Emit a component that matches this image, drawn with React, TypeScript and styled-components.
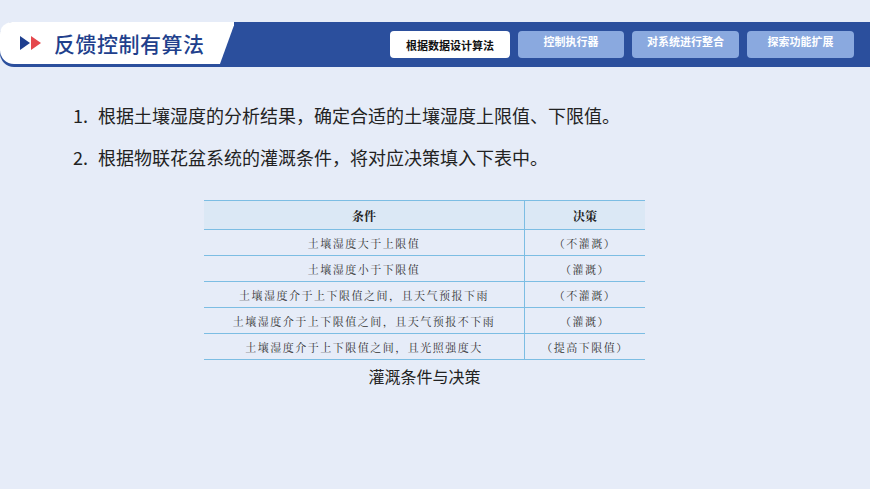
import React from "react";
import styled, { createGlobalStyle } from "styled-components";

const G = createGlobalStyle`
  html,body{margin:0;padding:0;background:#e6ecf8;}
  body{font-family:"Noto Sans CJK SC","Noto Sans",sans-serif;}
`;
const Page = styled.div`width:870px;height:489px;background:#e6ecf8;padding-top:22px;box-sizing:border-box;`;
const Header = styled.div`
  height:45px;background:#2b4f9d;border-radius:14px 0 0 14px;display:flex;align-items:center;position:relative;
`;
const TitleArea = styled.div`
  width:234px;height:42px;margin-top:-3px;background:#fff;border-radius:12px 0 0 14px;
  clip-path:polygon(0 0,100% 0,100% 8%,94% 100%,0 100%);
  display:flex;align-items:center;padding-left:20px;box-sizing:border-box;gap:8px;
`;
const Title = styled.div`font-size:21px;color:#213f8c;font-weight:500;letter-spacing:0.5px;`;
const Tabs = styled.div`display:flex;gap:8px;margin-left:156px;`;
const Tab = styled.div<{ $active?: boolean; $w: number }>`
  width:${p => p.$w}px;height:27px;border-radius:4px;display:flex;align-items:center;justify-content:center;
  font-size:11px;font-weight:700;background:${p => (p.$active ? "#fff" : "#8aa9df")};
  color:${p => (p.$active ? "#111" : "#fff")};padding-bottom:${p => (p.$active ? 0 : 8)}px;box-sizing:border-box;
`;
const List = styled.ol`margin:27px 0 0 0;padding-left:92px;font-size:18px;color:#222;`;
const Item = styled.li`line-height:42px;padding-left:6px;`;
const TableWrap = styled.div`margin:22px 0 0 204px;width:441px;`;
const Table = styled.table`width:100%;border-collapse:collapse;font-family:"Noto Serif CJK SC","Noto Sans CJK SC",serif;`;
const Th = styled.th`background:#dbe8f5;height:28px;padding:0;font-size:12px;font-weight:700;color:#222;border-top:1px solid #7cbde3;border-bottom:1px solid #7cbde3;
  &:first-child{border-right:1px solid #7cbde3;width:320px;}`;
const Td = styled.td`height:25px;padding:0;line-height:14px;font-size:11px;color:#333;text-align:center;letter-spacing:1.5px;border-bottom:1px solid #7cbde3;
  &:first-child{border-right:1px solid #7cbde3;}`;
const Caption = styled.div`text-align:center;font-size:16px;color:#222;margin-top:4px;`;

const rows = [
  ["土壤湿度大于上限值", "（不灌溉）"],
  ["土壤湿度小于下限值", "（灌溉）"],
  ["土壤湿度介于上下限值之间，且天气预报下雨", "（不灌溉）"],
  ["土壤湿度介于上下限值之间，且天气预报不下雨", "（灌溉）"],
  ["土壤湿度介于上下限值之间，且光照强度大", "（提高下限值）"],
];

export default function App() {
  return (
    <Page>
      <G />
      <Header>
        <TitleArea>
          <svg width="26" height="16" viewBox="0 0 26 16">
            <polygon points="0,1 10,8 0,15" fill="#1f3f8f" />
            <polygon points="11,1 21,8 11,15" fill="#e5484d" />
          </svg>
          <Title>反馈控制有算法</Title>
        </TitleArea>
        <Tabs>
          <Tab $active $w={120}>根据数据设计算法</Tab>
          <Tab $w={106}>控制执行器</Tab>
          <Tab $w={107}>对系统进行整合</Tab>
          <Tab $w={107}>探索功能扩展</Tab>
        </Tabs>
      </Header>
      <List>
        <Item>根据土壤湿度的分析结果，确定合适的土壤湿度上限值、下限值。</Item>
        <Item>根据物联花盆系统的灌溉条件，将对应决策填入下表中。</Item>
      </List>
      <TableWrap>
        <Table>
          <thead><tr><Th>条件</Th><Th>决策</Th></tr></thead>
          <tbody>
            {rows.map(r => (<tr key={r[0]}><Td>{r[0]}</Td><Td>{r[1]}</Td></tr>))}
          </tbody>
        </Table>
        <Caption>灌溉条件与决策</Caption>
      </TableWrap>
    </Page>
  );
}
